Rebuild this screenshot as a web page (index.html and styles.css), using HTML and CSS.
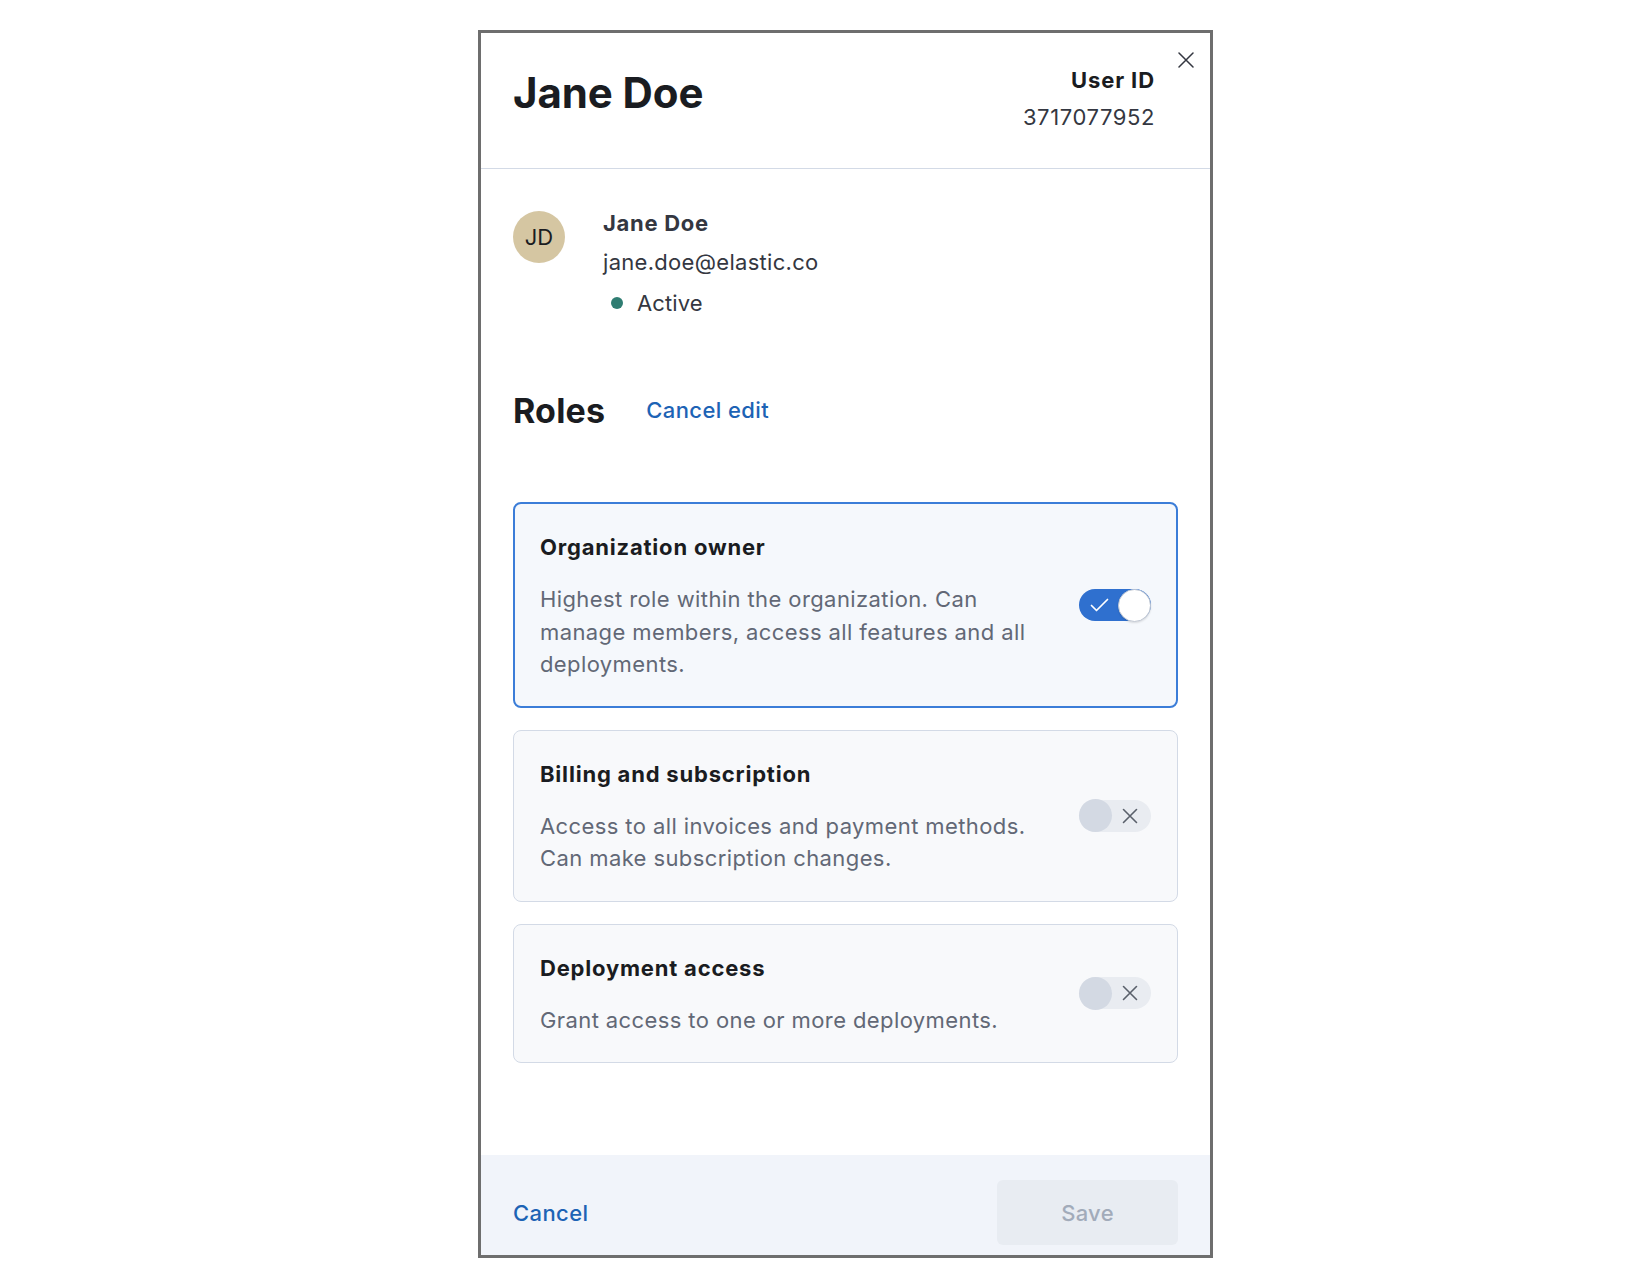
FILE: index.html
```html
<!DOCTYPE html>
<html lang="en">
<head>
<meta charset="utf-8">
<title>Jane Doe</title>
<link rel="stylesheet" href="styles.css">
</head>
<body>
<div class="flyout">
  <header class="flyout-header">
    <h1 class="title">Jane Doe</h1>
    <div class="user-id">
      <div class="user-id-label">User ID</div>
      <div class="user-id-value">3717077952</div>
    </div>
    <button class="close" aria-label="Close">
      <svg width="16" height="16" viewBox="0 0 16 16"><path d="M1 1 L15 15 M15 1 L1 15" stroke="#343741" stroke-width="1.5" fill="none" stroke-linecap="round"/></svg>
    </button>
  </header>
  <main class="flyout-body">
    <section class="user">
      <div class="avatar">JD</div>
      <div class="user-info">
        <div class="user-name">Jane Doe</div>
        <div class="user-email">jane.doe@elastic.co</div>
        <div class="user-status"><span class="dot"></span><span>Active</span></div>
      </div>
    </section>
    <div class="roles-head">
      <h2 class="roles-title">Roles</h2>
      <a class="link" href="#">Cancel edit</a>
    </div>
    <div class="cards">
      <div class="card card-selected">
        <div class="card-text">
          <div class="card-title">Organization owner</div>
          <p class="card-desc">Highest role within the organization. Can manage members, access all features and all deployments.</p>
        </div>
        <span class="switch switch-on">
          <svg class="switch-icon" width="19" height="14" viewBox="0 0 19 14"><path d="M1.5 7.5 L6.5 12.5 L17.5 1.5" stroke="#fff" stroke-width="1.7" fill="none" stroke-linecap="round" stroke-linejoin="round"/></svg>
          <span class="knob"></span>
        </span>
      </div>
      <div class="card">
        <div class="card-text">
          <div class="card-title">Billing and subscription</div>
          <p class="card-desc">Access to all invoices and payment methods. Can make subscription changes.</p>
        </div>
        <span class="switch switch-off">
          <span class="knob"></span>
          <svg class="switch-icon" width="16" height="16" viewBox="0 0 16 16"><path d="M1.5 1.5 L14.5 14.5 M14.5 1.5 L1.5 14.5" stroke="#5a606b" stroke-width="1.6" fill="none" stroke-linecap="round"/></svg>
        </span>
      </div>
      <div class="card">
        <div class="card-text">
          <div class="card-title">Deployment access</div>
          <p class="card-desc">Grant access to one or more deployments.</p>
        </div>
        <span class="switch switch-off">
          <span class="knob"></span>
          <svg class="switch-icon" width="16" height="16" viewBox="0 0 16 16"><path d="M1.5 1.5 L14.5 14.5 M14.5 1.5 L1.5 14.5" stroke="#5a606b" stroke-width="1.6" fill="none" stroke-linecap="round"/></svg>
        </span>
      </div>
    </div>
  </main>
  <footer class="flyout-footer">
    <a class="link" href="#">Cancel</a>
    <button class="save" disabled>Save</button>
  </footer>
</div>
</body>
</html>
```
FILE: styles.css
```css
* { box-sizing: border-box; }
html, body { margin: 0; padding: 0; background: #fff; }
body {
  font-family: Inter, "Noto Sans", sans-serif;
  color: #1a1c21;
}
.flyout {
  margin: 30px 0 0 478px;
  width: 735px;
  height: 1228px;
  border: 3px solid #6e6e6e;
  display: flex;
  flex-direction: column;
  background: #fff;
}
.flyout-header {
  position: relative;
  display: flex;
  justify-content: space-between;
  align-items: flex-start;
  padding: 30px 55px 32px 32px;
  border-bottom: 1px solid #d3dae6;
}
.title {
  margin: 0;
  font-size: 42px;
  line-height: 60px;
  font-weight: 700;
  letter-spacing: -0.1px;
  color: #1a1c21;
}
.user-id { text-align: right; font-size: 22px; line-height: 37px; }
.user-id-label { font-weight: 700; color: #1a1c21; letter-spacing: 0.9px; margin-top: -1px; }
.user-id-value { color: #343741; letter-spacing: 0.6px; }
.close {
  position: absolute;
  top: 19px;
  right: 16px;
  width: 16px;
  height: 16px;
  padding: 0;
  border: 0;
  background: none;
  display: flex;
}
.flyout-body {
  flex: 1;
  padding: 34px 32px 0 32px;
}
.user { display: flex; align-items: flex-start; gap: 38px; }
.avatar {
  margin-top: 8px;
  width: 52px;
  height: 52px;
  border-radius: 50%;
  background: #d5c6a2;
  display: flex;
  align-items: center;
  justify-content: center;
  font-size: 22px;
  color: #1a1c21;
}
.user-info { font-size: 22px; line-height: 40px; color: #343741; }
.user-name { font-weight: 700; color: #343741; letter-spacing: 0.7px; }
.user-email { letter-spacing: 0.3px; margin-top: -1px; }
.user-status { display: flex; align-items: center; letter-spacing: 0.1px; margin-top: 1px; }
.dot {
  width: 12px;
  height: 12px;
  border-radius: 50%;
  background: #2f7d72;
  margin: 0 14px 0 8px;
}
.roles-head {
  display: flex;
  align-items: center;
  gap: 41px;
  margin-top: 65px;
  height: 44px;
}
.roles-title {
  margin: 0;
  font-size: 34px;
  font-weight: 700;
  letter-spacing: 0.2px;
  color: #1a1c21;
}
.link {
  color: #1d63b5;
  font-size: 22px;
  font-weight: 500;
  letter-spacing: 0.4px;
  text-decoration: none;
}
.cards {
  margin-top: 70px;
  display: flex;
  flex-direction: column;
  gap: 22px;
}
.card {
  display: flex;
  align-items: center;
  gap: 36px;
  padding: 26px;
  border: 1px solid #d3dae6;
  border-radius: 8px;
  background: #f8f9fb;
}
.card-selected {
  border: 2px solid #3b7dd8;
  padding: 26px 25px 25px 25px;
  background: #f5f8fc;
}
.card-text { flex: 1; }
.card-title {
  font-size: 22px;
  line-height: 34px;
  font-weight: 700;
  letter-spacing: 0.8px;
  color: #1a1c21;
}
.card-desc {
  margin: 19px 0 0 0;
  font-size: 22px;
  line-height: 32.5px;
  letter-spacing: 0.4px;
  color: #626876;
}
.switch {
  flex: none;
  width: 72px;
  height: 32px;
  border-radius: 16px;
  display: flex;
  align-items: center;
  justify-content: space-between;
}
.knob {
  width: 33px;
  height: 33px;
  border-radius: 50%;
}
.switch-on { background: #2f70cf; padding-left: 11px; }
.switch-on .knob { background: #fff; border: 1.5px solid #c2c9d4; box-shadow: 0 1px 2px rgba(0,0,0,0.12); }
.switch-off { background: #e9ecf1; padding-right: 13px; }
.switch-off .knob { background: #d3d9e3; }
.switch-icon { display: block; }
.flyout-footer {
  display: flex;
  align-items: center;
  justify-content: space-between;
  padding: 25px 32px 10px 32px;
  background: #f1f4fa;
}
.save {
  width: 181px;
  height: 65px;
  border: 0;
  border-radius: 6px;
  background: #e8ecf2;
  color: #a2abba;
  font-family: Inter, "Noto Sans", sans-serif;
  font-size: 22px;
  font-weight: 500;
  letter-spacing: 0.3px;
}
```
